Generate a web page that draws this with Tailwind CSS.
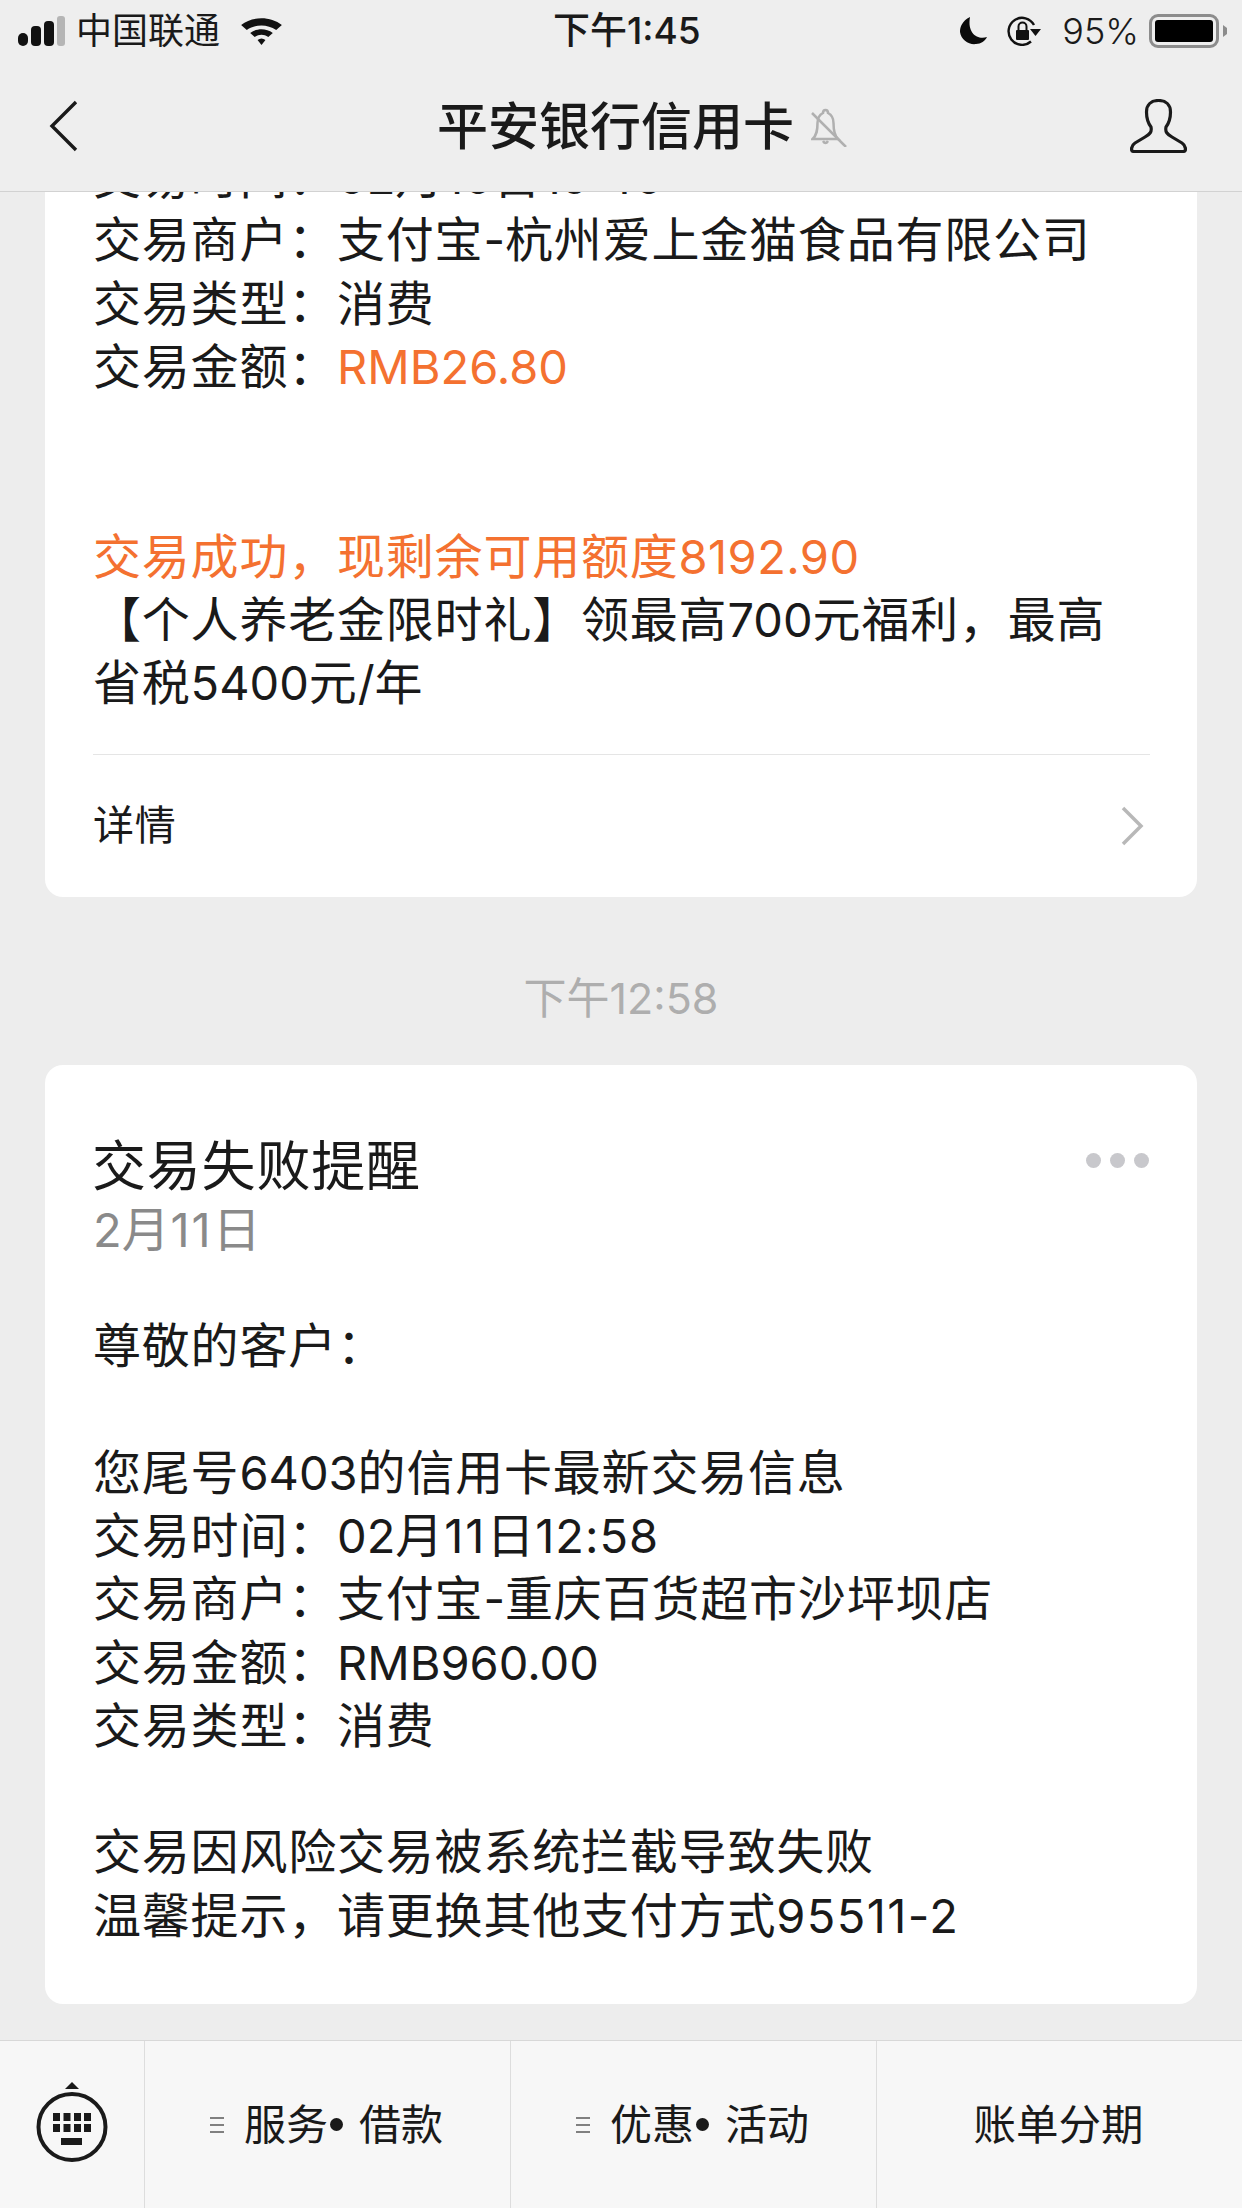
<!DOCTYPE html>
<html lang="zh-CN">
<head>
<meta charset="utf-8">
<script src="https://cdn.jsdelivr.net/npm/@tailwindcss/browser@4"></script>
</head>
<body class="m-0">
<div class="w-[1242px] h-[2208px] bg-[#ededed] flex flex-col overflow-hidden text-[#1a1a1a] font-['Inter','Noto_Sans_CJK_SC',sans-serif]">
  <header class="relative z-10 h-[192px] shrink-0 bg-[#eeeeee] border-b border-[#d2d2d2]">
    <div class="relative h-[62px] flex items-center justify-between pl-[18px] pr-[15px] text-[36px] leading-none">
      <div class="flex items-center">
        <svg width="47" height="30" viewBox="0 0 47 30"><rect x="0" y="17" width="10" height="13" rx="5" fill="#111"/><rect x="13" y="10" width="10" height="20" rx="4" fill="#111"/><rect x="26" y="5" width="10" height="25" rx="4" fill="#111"/><rect x="39" y="0" width="8" height="30" rx="3" fill="#b5b5b5"/></svg>
        <span class="ml-[11px]">中国联通</span>
        <svg width="43" height="30" viewBox="0 0 38 30" preserveAspectRatio="none" class="ml-[20px]"><path d="M1 9 C11 0 27 0 37 9 L32 14 C24 8 14 8 6 14 Z" fill="#111"/><path d="M9 17 C15 12 23 12 29 17 L25 21 C21 18 17 18 13 21 Z" fill="#111"/><path d="M15.500 24 C18 22 20 22 22.500 24 L19 29 Z" fill="#111"/></svg>
      </div>
      <span class="absolute left-[553px] top-[13px] text-[37px] leading-[36px] font-medium">下午1:45</span>
      <div class="flex items-center">
        <svg width="27" height="28" viewBox="0 0 27 28"><path d="M10 0 C2 4 0 10 0 15 C1 23 9 28 16 27 C21 27 25 24 27 20 C18 23 7 17 10 0 Z" fill="#0a0a0a"/></svg>
        <svg width="34" height="30" viewBox="0 0 34 30" class="ml-[20px]"><path d="M24 25.500 A13.500 13.500 0 1 1 27 9" fill="none" stroke="#111" stroke-width="2.400"/><path d="M23 13 L34 13 L28.500 20 Z" fill="#111"/><rect x="9" y="14" width="13" height="10" rx="1" fill="#111"/><path d="M11.500 14 V10.500 A4 4 0 0 1 19.500 10.500 V14" fill="none" stroke="#111" stroke-width="2"/></svg>
        <span class="ml-[21px] text-[36px] font-light">95%</span>
        <div class="ml-[10px] w-[70px] h-[34px] rounded-[9px] border-[3px] border-[#8c8c8c] p-[3px]"><div class="w-full h-full rounded-[3px] bg-black"></div></div>
        <svg width="4" height="12" viewBox="0 0 4 12" class="ml-[4px]"><path d="M0 0 L4 3 V9 L0 12 Z" fill="#8c8c8c"/></svg>
      </div>
    </div>
    <div class="relative h-[129px]">
      <svg width="30" height="52" viewBox="0 0 30 52" class="absolute left-[49px] top-[38px]"><path d="M27 2 L3 26 L27 50" fill="none" stroke="#1a1a1a" stroke-width="3.400"/></svg>
      <div class="absolute left-[437px] top-[36px] flex items-center">
        <span class="text-[51px] leading-[58px] font-medium">平安银行信用卡</span>
        <svg width="36" height="39" viewBox="0 0 36 39" class="ml-[17px]"><path d="M1.500 31 H27 C23 27 22.500 22 22.500 15 C22.500 9 19 6 17 5 C17 1 12 1 12 5 C10 6 6.500 9 6.500 15 C6.500 22 6 27 1.500 31 Z" fill="none" stroke="#b0b0b0" stroke-width="2.500"/><path d="M12 33 Q14.500 37 17 33" fill="none" stroke="#b0b0b0" stroke-width="2.500"/><path d="M1 5 L35 39" stroke="#b0b0b0" stroke-width="2.500"/></svg>
      </div>
      <svg width="57" height="54" viewBox="0 0 57 54" class="absolute left-[1130px] top-[37px]"><path d="M21 28 C18 24 16.500 18 16.500 13 C16.500 6 21 1.500 28.500 1.500 C36 1.500 40.500 6 40.500 13 C40.500 18 39 24 36 28 C35 33 37 35 42 38 L52 44 C55 46 55.500 48 55.500 50 C55.500 51.500 55 52.500 53 52.500 L4 52.500 C2 52.500 1.500 51.500 1.500 50 C1.500 48 2 46 5 44 L15 38 C20 35 22 33 21 28 Z" fill="none" stroke="#1a1a1a" stroke-width="3.200" stroke-linejoin="round"/></svg>
    </div>
  </header>

  <main class="flex-1 min-h-0 flex flex-col px-[45px]">
    <section class="-mt-[60px] shrink-0 bg-white rounded-b-[18px] h-[765px] flex flex-col pl-[48px] pr-[47px] text-[48px] leading-[63.3px] tracking-[0.8px]">
      <div class="pt-[13px]">
        <p>交易时间：<span class="text-[47px] tracking-normal">02</span>月<span class="text-[47px] tracking-normal">10</span>日<span class="text-[47px] tracking-normal">19:40</span></p>
        <p>交易商户：支付宝<span class="text-[47px] tracking-normal">-</span>杭州爱上金猫食品有限公司</p>
        <p>交易类型：消费</p>
        <p>交易金额：<span class="text-[47px] tracking-normal text-[#f47130]">RMB26.80</span></p>
        <p class="mt-[126.600px] text-[#f47130]">交易成功，现剩余可用额度<span class="text-[47px] tracking-[0.4px]">8192.90</span></p>
        <p>【个人养老金限时礼】领最高<span class="text-[47px] tracking-normal">700</span>元福利，最高</p>
        <p>省税<span class="text-[47px] tracking-normal">5400</span>元<span class="text-[47px] tracking-normal">/</span>年</p>
      </div>
      <div class="mt-[39px] border-t border-[#e5e5e5] flex-1 flex items-center justify-between">
        <span class="text-[41px]">详情</span>
        <svg width="24" height="40" viewBox="0 0 24 40" class="mr-[6px]"><path d="M3 2 L21 20 L3 38" fill="none" stroke="#b8b8b8" stroke-width="3.500"/></svg>
      </div>
    </section>

    <div class="mt-[66px] mb-[32px] h-[70px] shrink-0 flex items-center justify-center text-[43px] text-[#aeaeae]">下午12:58</div>

    <section class="relative shrink-0 bg-white rounded-[18px] h-[939px] pl-[48px] pr-[47px] pt-[70px] text-[48px] leading-[63.3px] tracking-[0.8px]">
      <h2 class="font-normal text-[54px] leading-[63px] tracking-[0.8px] -ml-[1px]">交易失败提醒</h2>
      <p class="text-[#8a8a8a]"><span class="text-[47px] tracking-normal">2</span>月<span class="text-[47px] tracking-[2px]">11</span>日</p>
      <p class="mt-[53px]">尊敬的客户：</p>
      <p class="mt-[63.300px]">您尾号<span class="text-[47px] tracking-normal">6403</span>的信用卡最新交易信息</p>
      <p>交易时间：<span class="text-[47px] tracking-normal">02</span>月<span class="text-[47px] tracking-[2px]">11</span>日<span class="text-[47px] tracking-[1px]">12:58</span></p>
      <p>交易商户：支付宝<span class="text-[47px] tracking-normal">-</span>重庆百货超市沙坪坝店</p>
      <p>交易金额：<span class="text-[47px] tracking-normal">RMB960.00</span></p>
      <p>交易类型：消费</p>
      <p class="mt-[63px]">交易因风险交易被系统拦截导致失败</p>
      <p>温馨提示，请更换其他支付方式<span class="text-[47px] tracking-[1.4px]">95511-2</span></p>
      <div class="absolute left-[1041px] top-[88px] flex gap-[9px]">
        <span class="w-[15px] h-[15px] rounded-full bg-[#c8c8cc]"></span><span class="w-[15px] h-[15px] rounded-full bg-[#c8c8cc]"></span><span class="w-[15px] h-[15px] rounded-full bg-[#c8c8cc]"></span>
      </div>
    </section>
  </main>

  <footer class="h-[168px] shrink-0 bg-[#f7f7f7] border-t border-[#d8d8d8] flex text-[42px]">
    <div class="w-[145px] border-r border-[#dddddd] flex items-start justify-center pt-[41px]">
      <svg width="72" height="82" viewBox="0 0 72 82"><path d="M36 0 L43 7 L29 7 Z" fill="#1a1a1a"/><ellipse cx="36" cy="45" rx="33.500" ry="33" fill="none" stroke="#1a1a1a" stroke-width="4"/><g fill="#1a1a1a"><rect x="17" y="31" width="7" height="8"/><rect x="27.500" y="31" width="7" height="8"/><rect x="38" y="31" width="7" height="8"/><rect x="48" y="31" width="7" height="8"/><rect x="17" y="42" width="7" height="8"/><rect x="27.500" y="42" width="7" height="8"/><rect x="38" y="42" width="7" height="8"/><rect x="48" y="42" width="7" height="8"/><rect x="25" y="56" width="21" height="7"/></g></svg>
    </div>
    <div class="w-[366px] border-r border-[#dddddd] flex items-center pl-[65px]">
      <span class="flex flex-col gap-[5px] mr-[20px]"><i class="block w-[14px] h-[2px] bg-[#808080]"></i><i class="block w-[14px] h-[2px] bg-[#808080]"></i><i class="block w-[14px] h-[2px] bg-[#808080]"></i></span>
      <span>服务</span><i class="block w-[13px] h-[13px] rounded-full bg-[#1a1a1a] ml-[2px] mr-[16px]"></i><span>借款</span>
    </div>
    <div class="w-[366px] border-r border-[#dddddd] flex items-center pl-[65px]">
      <span class="flex flex-col gap-[5px] mr-[20px]"><i class="block w-[14px] h-[2px] bg-[#808080]"></i><i class="block w-[14px] h-[2px] bg-[#808080]"></i><i class="block w-[14px] h-[2px] bg-[#808080]"></i></span>
      <span>优惠</span><i class="block w-[13px] h-[13px] rounded-full bg-[#1a1a1a] ml-[2px] mr-[16px]"></i><span>活动</span>
    </div>
    <div class="flex-1 flex items-center justify-center"><span class="text-[42.5px] -ml-[2px]">账单分期</span></div>
  </footer>
</div>
</body>
</html>
